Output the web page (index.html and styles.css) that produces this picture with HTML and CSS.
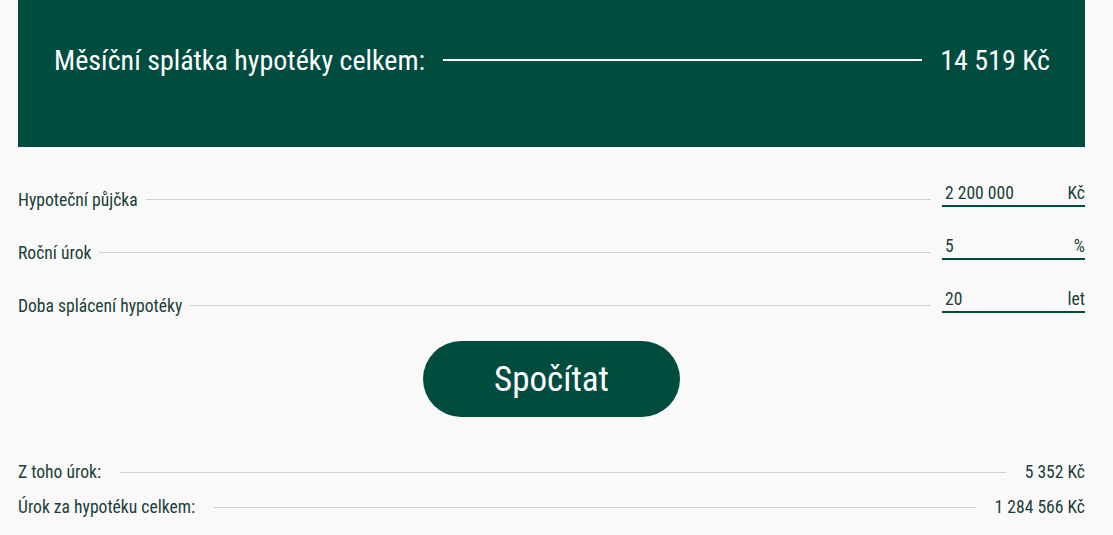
FILE: index.html
```html
<!DOCTYPE html>
<html lang="cs">
<head>
    <meta charset="UTF-8">
    <meta name="viewport" content="width=device-width, initial-scale=1.0">
    <title>Hypoteční kalkulačka</title>
    <link rel="stylesheet" href="styles.css">
</head>
<body>
    <div class="calc">
        <div class="total">
            <span class="total-label">Měsíční splátka hypotéky celkem:</span>
            <span class="total-line"></span>
            <span class="total-value">14 519 Kč</span>
        </div>
        <div class="fields">
            <div class="field">
                <span class="field-label">Hypoteční půjčka</span>
                <span class="dots"></span>
                <label class="input">
                    <span class="input-value">2 200 000</span>
                    <span class="unit">Kč</span>
                </label>
            </div>
            <div class="field">
                <span class="field-label">Roční úrok</span>
                <span class="dots"></span>
                <label class="input">
                    <span class="input-value">5</span>
                    <span class="unit">%</span>
                </label>
            </div>
            <div class="field">
                <span class="field-label">Doba splácení hypotéky</span>
                <span class="dots"></span>
                <label class="input">
                    <span class="input-value">20</span>
                    <span class="unit">let</span>
                </label>
            </div>
        </div>
        <div class="actions">
            <button class="btn">Spočítat</button>
        </div>
        <div class="results">
            <div class="result">
                <span>Z toho úrok:</span>
                <span class="dots"></span>
                <span class="result-value">5 352 Kč</span>
            </div>
            <div class="result">
                <span>Úrok za hypotéku celkem:</span>
                <span class="dots"></span>
                <span class="result-value">1 284 566 Kč</span>
            </div>
        </div>
    </div>
</body>
</html>
```

FILE: styles.css
```css
body {
    margin: 0;
    background: #f9f9f9;
    font-family: "Roboto Condensed", Roboto, "Liberation Sans", sans-serif;
    font-stretch: condensed;
    color: #1b3f38;
}
.calc {
    margin: 0 28px 0 18px;
}
.total {
    background: #004d40;
    color: #fff;
    height: 147px;
    padding: 0 35px 27px 36px;
    display: flex;
    align-items: center;
    gap: 18px;
    font-size: 28px;
    box-sizing: border-box;
}
.total-line {
    flex: 1;
    height: 2px;
    background: #fff;
}
.fields {
    padding-top: 26px;
}
.field {
    display: flex;
    align-items: center;
    height: 53px;
    font-size: 17.6px;
}
.field-label {
    line-height: 24px;
}
.dots {
    flex: 1;
    height: 1px;
    background: #cfcfcf;
    margin: 0 11px 0 8px;
}
.input {
    width: 143px;
    display: flex;
    justify-content: space-between;
    border-bottom: 2px solid #004d40;
    padding: 0 0 2px 3px;
    margin-bottom: 9px;
    box-sizing: border-box;
    line-height: 20px;
}
.actions {
    display: flex;
    justify-content: center;
    padding-top: 9px;
}
.btn {
    width: 257px;
    height: 76px;
    border: none;
    border-radius: 38px;
    background: #004d40;
    color: #fff;
    font-family: inherit;
    font-stretch: condensed;
    font-size: 35px;
    cursor: pointer;
}
.results {
    padding-top: 37px;
}
.result {
    display: flex;
    align-items: center;
    height: 35px;
    font-size: 17.6px;
}
.result .dots {
    margin: 1px 19px 0 19px;
}
```
